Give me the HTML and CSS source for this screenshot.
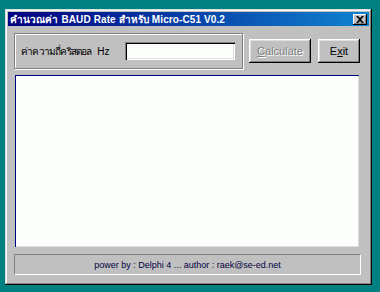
FILE: index.html
```html
<!DOCTYPE html>
<html lang="th">
<head>
  <meta charset="UTF-8">
  <title>BAUD Rate</title>
  <link rel="stylesheet" href="styles.css">
</head>
<body>

<div class="window">
  <!-- title bar -->
  <div class="titlebar">
    <span class="title">คำนวณค่า BAUD Rate สำหรับ Micro-C51 V0.2</span>
    <button class="close">
      <svg width="8" height="7" viewBox="0 0 8 7"><path d="M0 0h2l2 2 2-2h2L5 3.5 8 7H6L4 5 2 7H0l3-3.5z" fill="#000"/></svg>
    </button>
  </div>

  <div class="content">
    <!-- input row -->
    <div class="top-row">
      <div class="group">
        <label for="freq"><span class="th">ค่าความถี่คริสตอล</span>&nbsp;&nbsp;Hz</label>
        <input type="text" id="freq" class="edit">
      </div>
      <button class="btn disabled" disabled><u>C</u>alculate</button>
      <button class="btn">E<u>x</u>it</button>
    </div>

    <!-- result memo -->
    <div class="memo"></div>

    <!-- status panel -->
    <div class="status">power by : Delphi 4 ... author : raek@se-ed.net</div>
  </div>
</div>

</body>
</html>
```

FILE: styles.css
```css
body {
  margin: 0;
  background-color: #008080;
  font-family: "Liberation Sans", Arial, sans-serif;
  padding: 9px 0 0 5px;
}
.window {
  width: 367px;
  height: 276px;
  box-sizing: border-box;
  background-color: #c0c0c0;
  padding: 3px;
  box-shadow: inset -1px -1px #000, inset 1px 1px #dfdfdf, inset -2px -2px #808080, inset 2px 2px #fff;
  display: flex;
  flex-direction: column;
}
.titlebar {
  height: 14px;
  background: linear-gradient(to right, #000080, #1084d0);
  display: flex;
  align-items: center;
  justify-content: space-between;
  padding: 0 2px 0 2px;
}
.title {
  color: white;
  font-size: 10px;
  font-weight: bold;
  white-space: nowrap;
  letter-spacing: 0.1px;
}
.close {
  width: 14px;
  height: 11px;
  padding: 0;
  border: none;
  background-color: #c0c0c0;
  box-shadow: inset -1px -1px #000, inset 1px 1px #fff, inset -2px -2px #808080;
  display: flex;
  align-items: center;
  justify-content: center;
}
.content {
  flex: 1;
  display: flex;
  flex-direction: column;
  padding: 7px 8px 7px 6px;
  gap: 6px;
}
.top-row {
  display: flex;
  align-items: center;
  height: 36px;
}
.group {
  width: 229px;
  height: 36px;
  box-sizing: border-box;
  border: 1px solid #808080;
  box-shadow: inset 1px 1px #fff, 1px 1px #fff;
  display: flex;
  align-items: center;
  justify-content: space-between;
  padding: 0 7px 0 6px;
}
label {
  font-size: 10px;
  color: #000;
  white-space: nowrap;
}
.th {
  letter-spacing: -0.8px;
}
.edit {
  width: 110px;
  height: 18px;
  box-sizing: border-box;
  border: none;
  background-color: #fcfefc;
  box-shadow: inset 1px 1px #808080, inset 2px 2px #000, inset -1px -1px #fff, inset -2px -2px #dfdfdf;
}
.btn {
  height: 24px;
  margin-left: 6px;
  padding: 0;
  border: none;
  background-color: #c0c0c0;
  font-family: "Liberation Sans", Arial, sans-serif;
  font-size: 11px;
  color: #000;
  box-shadow: inset -1px -1px #000, inset 1px 1px #fff, inset -2px -2px #808080, inset 2px 2px #dfdfdf;
}
.btn.disabled {
  width: 62px;
  color: #808080;
  text-shadow: 1px 1px #fff;
}
.btn + .btn {
  width: 42px;
  margin-left: 7px;
}
.memo {
  height: 172px;
  margin-left: 1px;
  margin-right: 2px;
  background-color: #fcfefc;
  box-shadow: inset 1px 1px #000080, inset -1px -1px #dfdfdf;
}
.status {
  margin-top: 1px;
  height: 21px;
  box-sizing: border-box;
  border-top: 1px solid #808080;
  border-left: 1px solid #808080;
  border-bottom: 1px solid #fff;
  border-right: 1px solid #fff;
  font-size: 9px;
  color: #000040;
  display: flex;
  align-items: center;
  justify-content: center;
}
```
